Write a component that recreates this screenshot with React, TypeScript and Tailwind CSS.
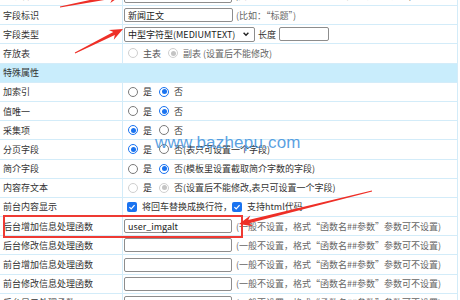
import type { ReactNode } from 'react'

const line = 'border-[#d3ecf9]'

function Radio({ checked = false, disabled = false }: { checked?: boolean; disabled?: boolean }) {
  if (disabled) {
    return (
      <span className="flex size-[10px] shrink-0 items-center justify-center rounded-full border border-[#cfcfcf] bg-white">
        {checked && <span className="size-[5px] rounded-full bg-[#c4c4c4]" />}
      </span>
    )
  }
  if (checked) {
    return (
      <span className="flex size-[10px] shrink-0 items-center justify-center rounded-full border-[1.5px] border-[#1a73f0] bg-white">
        <span className="size-[5px] rounded-full bg-[#1a73f0]" />
      </span>
    )
  }
  return <span className="block size-[10px] shrink-0 rounded-full border border-[#7a7a7a] bg-white" />
}

function Check() {
  return (
    <span className="flex size-[10px] shrink-0 items-center justify-center rounded-[2px] bg-[#1a73f0]">
      <svg viewBox="0 0 10 10" className="size-[8px]">
        <path d="M1.8 5.2 L4 7.3 L8.2 2.6" fill="none" stroke="white" strokeWidth="1.6" />
      </svg>
    </span>
  )
}

function TextBox({ value = '', width }: { value?: string; width: string }) {
  return (
    <span
      className={`flex h-[14px] shrink-0 items-center rounded-[2px] border border-[#8d8d8d] bg-white pl-[3px] text-[9px] text-[#222] ${width}`}
    >
      {value}
    </span>
  )
}

function YesNo({ yes, note = '', disabled = false }: { yes: boolean; note?: string; disabled?: boolean }) {
  return (
    <>
      <span className="ml-[4px]">
        <Radio checked={yes} disabled={disabled} />
      </span>
      <span className="ml-[5px] text-[#333]">是</span>
      <span className="ml-[7px]">
        <Radio checked={!yes} disabled={disabled} />
      </span>
      <span className="ml-[5px] text-[#333]">否{note}</span>
    </>
  )
}

function Row({ label, children }: { label: string; children?: ReactNode }) {
  return (
    <div className={`flex h-[19.2px] border-b ${line}`}>
      <div className={`flex w-[123px] shrink-0 items-center border-r ${line} pl-[3px] text-[#333]`}>
        {label}
      </div>
      <div className="flex min-w-0 flex-1 items-center overflow-hidden whitespace-nowrap pl-[1px]">
        {children}
      </div>
    </div>
  )
}

const funcNote = '(一般不设置，格式“函数名##参数”参数可不设置)'

type Pt = [number, number]

function arrowPoints(tail: Pt, tip: Pt) {
  const dx = tip[0] - tail[0]
  const dy = tip[1] - tail[1]
  const len = Math.hypot(dx, dy)
  const ux = dx / len
  const uy = dy / len
  const nx = -uy
  const ny = ux
  const head = 13
  const neck: Pt = [tip[0] - head * ux, tip[1] - head * uy]
  const joint: Pt = [tip[0] - (head - 3) * ux, tip[1] - (head - 3) * uy]
  const pts: Pt[] = [
    [tail[0] + 0.5 * nx, tail[1] + 0.5 * ny],
    [joint[0] + 1.7 * nx, joint[1] + 1.7 * ny],
    [neck[0] + 5.5 * nx, neck[1] + 5.5 * ny],
    tip,
    [neck[0] - 5.5 * nx, neck[1] - 5.5 * ny],
    [joint[0] - 1.7 * nx, joint[1] - 1.7 * ny],
    [tail[0] - 0.5 * nx, tail[1] - 0.5 * ny],
  ]
  return pts.map((p) => `${p[0].toFixed(1)},${p[1].toFixed(1)}`).join(' ')
}

export default function App() {
  return (
    <div className="relative h-[300px] w-[460px] overflow-hidden bg-white font-['Noto_Sans_CJK_SC','Microsoft_YaHei',sans-serif] text-[9px] leading-none">
      <div className={`mt-[-13.2px] w-[458px] border-r ${line}`}>
        <Row label="字段名">
          <TextBox width="w-[108px]" value="newstext" />
          <span className="ml-[3px] text-[#666]">(由英文、数字、下划线组成，必须英文开头)</span>
        </Row>
        <Row label="字段标识">
          <TextBox width="w-[109px]" value="新闻正文" />
          <span className="ml-[3px] text-[#666]">(比如：“标题”)</span>
        </Row>
        <Row label="字段类型">
          <span className="flex h-[15px] w-[131px] shrink-0 items-center justify-between rounded-[2px] border border-[#8d8d8d] bg-white pl-[3px] pr-[4px] text-[#222]">
            中型字符型(MEDIUMTEXT)
            <svg viewBox="0 0 10 10" className="size-[8px]">
              <path d="M2 3.5 L5 6.5 L8 3.5" fill="none" stroke="#222" strokeWidth="1.8" />
            </svg>
          </span>
          <span className="ml-[3px] text-[#333]">长度</span>
          <span className="ml-[3px]">
            <TextBox width="w-[50px]" />
          </span>
        </Row>
        <Row label="存放表">
          <span className="ml-[4px]">
            <Radio disabled />
          </span>
          <span className="ml-[5px] text-[#555]">主表</span>
          <span className="ml-[7px]">
            <Radio disabled checked />
          </span>
          <span className="ml-[5px] text-[#666]">副表 (设置后不能修改)</span>
        </Row>
        <div className={`flex h-[19.2px] items-center border-b ${line} bg-[#c9edfc] pl-[3px] text-[#333]`}>
          特殊属性
        </div>
        <Row label="加索引">
          <YesNo yes={false} />
        </Row>
        <Row label="值唯一">
          <YesNo yes={false} />
        </Row>
        <Row label="采集项">
          <YesNo yes />
        </Row>
        <Row label="分页字段">
          <YesNo yes note="(表只可设置一个字段)" />
        </Row>
        <Row label="简介字段">
          <YesNo yes={false} note="(模板里设置截取简介字数的字段)" />
        </Row>
        <Row label="内容存文本">
          <YesNo yes={false} disabled note="(设置后不能修改,表只可设置一个字段)" />
        </Row>
        <Row label="前台内容显示">
          <span className="ml-[3px]">
            <Check />
          </span>
          <span className="ml-[5px] text-[#333]">将回车替换成换行符，</span>
          <Check />
          <span className="ml-[5px] text-[#333]">支持html代码</span>
        </Row>
        <Row label="后台增加信息处理函数">
          <TextBox width="w-[108px]" value="user_imgalt" />
          <span className="ml-[4px] text-[#666]">{funcNote}</span>
        </Row>
        <Row label="后台修改信息处理函数">
          <TextBox width="w-[108px]" />
          <span className="ml-[4px] text-[#666]">{funcNote}</span>
        </Row>
        <Row label="前台增加信息处理函数">
          <TextBox width="w-[108px]" />
          <span className="ml-[4px] text-[#666]">{funcNote}</span>
        </Row>
        <Row label="前台修改信息处理函数">
          <TextBox width="w-[108px]" />
          <span className="ml-[4px] text-[#666]">{funcNote}</span>
        </Row>
        <Row label="后台显示处理函数">
          <TextBox width="w-[108px]" />
          <span className="ml-[4px] text-[#666]">{funcNote}</span>
        </Row>
      </div>

      {/* watermark */}
      <div className="absolute left-[155px] top-[134px] font-['Liberation_Sans',sans-serif] text-[17px] leading-none tracking-[0.2px] text-[#3d8fdc]/85">
        www.bazhepu.com
      </div>

      {/* red highlight box */}
      <div className="absolute left-[3px] top-[215px] h-[23px] w-[240px] border-2 border-[#ee3a33]" />

      <svg className="pointer-events-none absolute inset-0" width="460" height="300" viewBox="0 0 460 300">
        <polygon points={arrowPoints([60, 7], [122, -5])} fill="#ee2f27" />
        <polygon points={arrowPoints([75, 53], [123, 29])} fill="#ee2f27" />
        <polygon points={arrowPoints([372, 191], [239, 224])} fill="#ee2f27" />
      </svg>
    </div>
  )
}
